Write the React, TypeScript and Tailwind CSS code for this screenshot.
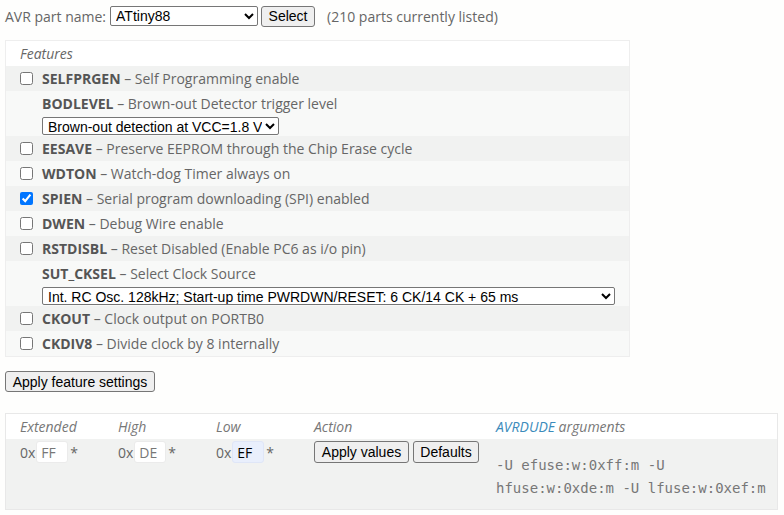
import React from 'react';

interface FuseRow {
  id: string;
  name: string;
  desc: string;
  checked?: boolean;
  options?: string[];
  selectWidth?: string;
}

const rows: FuseRow[] = [
  { id: 'selfprgen', name: 'SELFPRGEN', desc: 'Self Programming enable' },
  {
    id: 'bodlevel',
    name: 'BODLEVEL',
    desc: 'Brown-out Detector trigger level',
    options: ['Brown-out detection at VCC=1.8 V'],
    selectWidth: 'w-[237px]',
  },
  { id: 'eesave', name: 'EESAVE', desc: 'Preserve EEPROM through the Chip Erase cycle' },
  { id: 'wdton', name: 'WDTON', desc: 'Watch-dog Timer always on' },
  { id: 'spien', name: 'SPIEN', desc: 'Serial program downloading (SPI) enabled', checked: true },
  { id: 'dwen', name: 'DWEN', desc: 'Debug Wire enable' },
  { id: 'rstdisbl', name: 'RSTDISBL', desc: 'Reset Disabled (Enable PC6 as i/o pin)' },
  {
    id: 'sut_cksel',
    name: 'SUT_CKSEL',
    desc: 'Select Clock Source',
    options: ['Int. RC Osc. 128kHz; Start-up time PWRDWN/RESET: 6 CK/14 CK + 65 ms'],
    selectWidth: 'w-[573px]',
  },
  { id: 'ckout', name: 'CKOUT', desc: 'Clock output on PORTB0' },
  { id: 'ckdiv8', name: 'CKDIV8', desc: 'Divide clock by 8 internally' },
];

const btn =
  "h-[21px] rounded-[3px] border border-[#767676] bg-[#efefef] px-[6px] font-['Liberation_Sans',sans-serif] text-[14px] leading-none text-black";

const Label = ({ row }: { row: FuseRow }) => (
  <span className="whitespace-nowrap">
    <b className="font-bold text-[#555]">{row.name}</b> – {row.desc}
  </span>
);

const FuseInput = ({ value, active }: { value: string; active?: boolean }) => (
  <div className="flex items-center">
    <span>0x</span>
    <input
      readOnly
      value={value}
      className={
        active
          ? 'ml-px h-[22px] w-[32px] rounded-[3px] border border-[#dfe6f7] bg-[#e9effc] px-[4px] text-black outline-none'
          : 'ml-px h-[22px] w-[32px] rounded-[3px] border border-[#ebebeb] bg-white px-[4px] text-[#777] outline-none'
      }
    />
    <span className="ml-[2px]">*</span>
  </div>
);

export default function App() {
  return (
    <div className="min-h-screen bg-[#fefefd] px-[5px] pt-[5px] font-['Open_Sans',sans-serif] text-[14px] text-[#666]">
      <div className="flex h-[22px] items-center">
        <span>AVR part name:</span>
        <select
          defaultValue="ATtiny88"
          className="ml-[4px] h-[20px] w-[148px] rounded-[2px] border border-[#767676] bg-white pl-px font-['Liberation_Sans',sans-serif] text-[14px] text-black"
        >
          <option>ATtiny88</option>
        </select>
        <button className={`${btn} ml-[3px] w-[54px]`}>Select</button>
        <span className="ml-[12px]">(210 parts currently listed)</span>
      </div>

      <div className="mt-[13px] w-[625px] border border-[#eeeeee]">
        <div className="flex h-[25px] items-center bg-white pl-[14px] italic">Features</div>
        {rows.map((row, i) => {
          const bg = i % 2 === 0 ? 'bg-[#f1f2f1]' : 'bg-[#f8f9f8]';
          if (row.options) {
            return (
              <div key={row.id} className={`${bg} h-[45px] pl-[36px] pt-[1px]`}>
                <div className="flex h-[22px] items-center">
                  <Label row={row} />
                </div>
                <select
                  className={`${row.selectWidth} mt-[3px] h-[18px] rounded-[2px] border border-[#767676] bg-white pl-px font-['Liberation_Sans',sans-serif] text-[14px] leading-none text-black`}
                >
                  {row.options.map((o) => (
                    <option key={o}>{o}</option>
                  ))}
                </select>
              </div>
            );
          }
          return (
            <div key={row.id} className={`${bg} flex h-[25px] items-center pl-[14px]`}>
              <input
                type="checkbox"
                defaultChecked={row.checked}
                className="mr-[9px] h-[13px] w-[13px]"
              />
              <Label row={row} />
            </div>
          );
        })}
      </div>

      <button className={`${btn} mt-[14px] w-[150px]`}>Apply feature settings</button>

      <div className="mt-[21px] w-[773px] border border-[#e8e8e8]">
        <div className="grid h-[25px] grid-cols-[98px_98px_98px_182px_1fr] items-center bg-white pl-[14px] italic text-[#777]">
          <span>Extended</span>
          <span>High</span>
          <span>Low</span>
          <span>Action</span>
          <span>
            <span className="text-[#3b8bbb]">AVRDUDE</span> arguments
          </span>
        </div>
        <div className="grid h-[70px] grid-cols-[98px_98px_98px_182px_1fr] items-start bg-[#f1f2f1] pl-[14px] pt-[2px]">
          <FuseInput value="FF" />
          <FuseInput value="DE" />
          <FuseInput value="EF" active />
          <div className="flex gap-[4px]">
            <button className={`${btn} h-[22px] w-[95px]`}>Apply values</button>
            <button className={`${btn} h-[22px] w-[66px]`}>Defaults</button>
          </div>
          <div className="w-[275px] pt-[13px] font-['DejaVu_Sans_Mono',monospace] text-[14px] leading-[23px] text-[#777]">
            -U efuse:w:0xff:m -U hfuse:w:0xde:m -U lfuse:w:0xef:m
          </div>
        </div>
      </div>
    </div>
  );
}
